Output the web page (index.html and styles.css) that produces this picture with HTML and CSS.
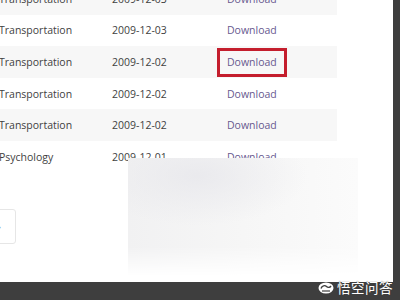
FILE: index.html
```html
<!DOCTYPE html>
<html>
<head>
<meta charset="utf-8">
<link rel="stylesheet" href="styles.css">
</head>
<body>
<div class="screen">
  <div class="main">
    <div class="list">
      <div class="row odd"><span>Transportation</span><span>2009-12-03</span><a class="dl">Download</a></div>
      <div class="row"><span>Transportation</span><span>2009-12-03</span><a class="dl">Download</a></div>
      <div class="row odd"><span>Transportation</span><span>2009-12-02</span><a class="dl hl">Download</a></div>
      <div class="row"><span>Transportation</span><span>2009-12-02</span><a class="dl">Download</a></div>
      <div class="row odd"><span>Transportation</span><span>2009-12-02</span><a class="dl">Download</a></div>
      <div class="row"><span>Psychology</span><span>2009-12-01</span><a class="dl">Download</a></div>
    </div>
    <div class="pager"><span class="pg">›</span></div>
    <div class="blur"></div>
  </div>
  <div class="side"></div>
</div>
<div class="bottom"></div>
<div class="wm">
  <svg class="logo" width="16" height="12" viewBox="0 0 16 12">
    <ellipse cx="8" cy="6" rx="7.5" ry="5.5" fill="#fff"/>
    <path d="M3 6.5 C4 3.5 7 3 8.5 4.5 C10 6 12 5.5 13 4" fill="none" stroke="#3e3e3e" stroke-width="1.4"/>
    <path d="M4 9 L12 9" stroke="#3e3e3e" stroke-width="1.2"/>
  </svg>
  <span class="wmtext">悟空问答</span>
</div>
</body>
</html>
```
FILE: styles.css
```css
html, body {
  margin: 0;
  padding: 0;
  width: 400px;
  height: 300px;
  overflow: hidden;
  background: #3e3e3e;
}
body {
  position: relative;
  font-family: "Open Sans", "Liberation Sans", sans-serif;
}
.screen {
  display: flex;
  height: 282px;
}
.main {
  width: 393px;
  background: #fff;
  position: relative;
  overflow: hidden;
}
.side {
  flex: 1;
  background: #3e3e3e;
}
.bottom {
  height: 18px;
  background: #3e3e3e;
}
.list {
  margin-top: -17px;
  margin-left: -1px;
  width: 338px;
}
.row {
  display: grid;
  grid-template-columns: 113px 115px 1fr;
  align-items: center;
  height: 31.6px;
  font-size: 10.5px;
  color: #3f3f3f;
}
.row.odd {
  background: #f7f7f7;
}
.dl {
  color: #68598f;
  line-height: 14px;
  justify-self: start;
}
.hl {
  position: relative;
}
.hl::after {
  content: "";
  position: absolute;
  left: -10px;
  right: -10px;
  top: -7px;
  bottom: -8px;
  border: 3px solid #c41e2d;
}
.pager {
  margin-top: 36px;
  margin-left: -18px;
}
.pg {
  display: flex;
  align-items: center;
  justify-content: center;
  width: 32px;
  height: 33px;
  border: 1px solid #e6e6e6;
  border-radius: 3px;
  color: #777;
  font-size: 12px;
}
.blur {
  position: absolute;
  left: 128px;
  top: 158px;
  width: 230px;
  height: 118px;
  background:
    radial-gradient(ellipse 110px 50px at 30% 15%, rgba(232,232,236,0.85), rgba(244,244,246,0) 100%),
    linear-gradient(to right, #f1f1f2 0%, #f6f6f6 50%, #fbfbfb 100%);
  -webkit-mask-image: linear-gradient(to bottom, #000 0%, #000 75%, transparent 100%);
  mask-image: linear-gradient(to bottom, #000 0%, #000 75%, transparent 100%);
}
.wm {
  position: absolute;
  left: 318px;
  top: 281px;
  display: flex;
  align-items: center;
  gap: 3px;
  color: #fff;
}
.logo {
  display: block;
}
.wmtext {
  font-family: "Noto Sans CJK SC", sans-serif;
  font-size: 13.5px;
  line-height: 13px;
  letter-spacing: 0.5px;
  color: #fff;
  text-shadow: 0 0 1px #3e3e3e;
}
```
